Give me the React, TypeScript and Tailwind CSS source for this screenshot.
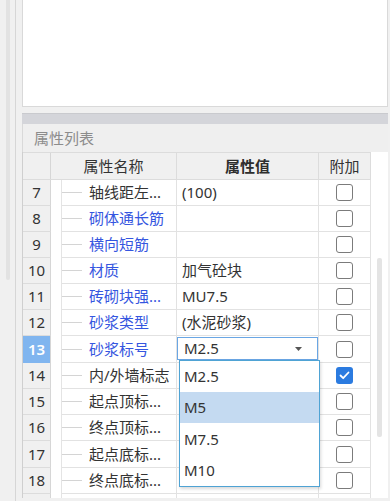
import React from 'react';

type Row = {
  n: number;
  name: string;
  blue?: boolean;
  value?: string;
  checked?: boolean;
  selected?: boolean;
  h: string;
};

const rows: Row[] = [
  { n: 7, name: '轴线距左...', value: '(100)', h: 'h-[26px]' },
  { n: 8, name: '砌体通长筋', blue: true, h: 'h-[26px]' },
  { n: 9, name: '横向短筋', blue: true, h: 'h-[26px]' },
  { n: 10, name: '材质', blue: true, value: '加气砼块', h: 'h-[26px]' },
  { n: 11, name: '砖砌块强...', blue: true, value: 'MU7.5', h: 'h-[26px]' },
  { n: 12, name: '砂浆类型', blue: true, value: '(水泥砂浆)', h: 'h-[26px]' },
  { n: 13, name: '砂浆标号', blue: true, value: 'M2.5', selected: true, h: 'h-[27px]' },
  { n: 14, name: '内/外墙标志', checked: true, h: 'h-[26px]' },
  { n: 15, name: '起点顶标...', h: 'h-[26px]' },
  { n: 16, name: '终点顶标...', h: 'h-[26px]' },
  { n: 17, name: '起点底标...', h: 'h-[27px]' },
  { n: 18, name: '终点底标...', h: 'h-[26px]' },
  { n: 19, name: '', h: 'h-[26px]' },
];

function CheckBox({ checked }: { checked?: boolean }) {
  if (checked) {
    return (
      <div className="w-[17px] h-[17px] rounded-[3px] bg-[#2b7be0] flex items-center justify-center">
        <svg width="11" height="9" viewBox="0 0 11 9">
          <path d="M1.5 4.5 L4.2 7.2 L9.5 1.5" fill="none" stroke="#fff" strokeWidth="1.8" strokeLinecap="round" strokeLinejoin="round" />
        </svg>
      </div>
    );
  }
  return <div className="w-[17px] h-[17px] rounded-[3px] border-[1.5px] border-[#7b7b7b] bg-white" />;
}

export default function App() {
  const font = { fontFamily: '"Noto Sans", "Noto Sans CJK SC", sans-serif' };
  return (
    <div className="w-[390px] h-[501px] bg-[#f0f0f0] flex overflow-hidden text-[#333]" style={font}>
      {/* left gutter */}
      <div className="w-[22px] h-full flex">
        <div className="w-[6px]" />
        <div className="w-[4px] flex flex-col">
          <div className="h-[280px] bg-[#e2e2e2] rounded-b-[2px]" />
        </div>
        <div className="w-[5px]" />
        <div className="w-px h-full bg-[#d6d6d6]" />
      </div>

      {/* main column */}
      <div className="w-[366px] h-full flex flex-col">
        <div className="h-[107px] shrink-0 bg-white border-x border-b border-[#d9d9d9]" />
        <div className="h-[6px] shrink-0" />
        <div className="h-[11px] shrink-0 bg-[#d4d5da] border-t border-[#c9cace]" />
        <div className="h-[28px] shrink-0 bg-[#efefef] flex items-center pl-[11px] text-[15px] text-[#8c8c8c] leading-none border-l border-[#d9d9d9]">
          属性列表
        </div>

        {/* table area */}
        <div className="relative flex h-[346px] shrink-0 overflow-hidden bg-white border-l border-[#cfcfcf]">
          <div className="w-[348px] flex flex-col">
            {/* header */}
            <div className="h-[28px] shrink-0 flex bg-[#f0f0f0] border-y border-[#dcdcdc] text-[15px] leading-none">
              <div className="w-[28px] border-r border-[#d6d6d6]" />
              <div className="w-[126px] border-r border-[#dcdcdc] flex items-center justify-center">属性名称</div>
              <div className="w-[142px] border-r border-[#dcdcdc] flex items-center justify-center font-semibold text-[#2d2d2d]">属性值</div>
              <div className="w-[52px] border-r border-[#dcdcdc] flex items-center justify-center">附加</div>
            </div>
            {rows.map((r) => (
              <div key={r.n} className={`${r.h} shrink-0 flex text-[15px] leading-none`}>
                <div
                  className={`w-[28px] flex items-center justify-center border-r border-[#d6d6d6] ${
                    r.selected ? 'bg-[#80b5ef] text-white font-semibold' : 'bg-[#f0f0f0] border-b border-b-[#dcdcdc]'
                  }`}
                >
                  {r.name !== '' ? r.n : null}
                </div>
                <div className="w-[11px] border-r border-[#e4e4e4]" />
                <div className="w-[115px] flex items-center border-r border-b border-[#e2e2e2]">
                  <div className="w-[20px] h-px bg-[#d4d4d4]" />
                  <span className={`ml-[7px] whitespace-nowrap ${r.blue ? 'text-[#3556e0]' : 'text-[#333]'}`}>{r.name}</span>
                </div>
                <div className="w-[142px] flex items-start border-r border-b border-[#e2e2e2]">
                  {r.selected ? (
                    <div className="mt-px h-[23px] w-full border border-[#6aa6e4] flex items-center pl-[6px] pr-[15px] bg-white">
                      <span className="flex-1">{r.value}</span>
                      <svg width="7" height="4" viewBox="0 0 7 4">
                        <path d="M0 0 H7 L3.5 4 Z" fill="#555" />
                      </svg>
                    </div>
                  ) : (
                    <div className="h-full flex items-center pl-[5px] whitespace-nowrap">{r.value}</div>
                  )}
                </div>
                <div className="w-[52px] flex items-center justify-center border-r border-b border-[#e2e2e2]">
                  {r.name !== '' && <CheckBox checked={r.checked} />}
                </div>
              </div>
            ))}
          </div>

          {/* right scroll strip */}
          <div className="w-[17px] flex">
            <div className="w-[6px]" />
            <div className="w-[5px] flex flex-col">
              <div className="h-[106px]" />
              <div className="h-[179px] bg-[#e4e4e4] rounded-[2px]" />
            </div>
          </div>

          {/* dropdown list */}
          <div className="absolute left-[156px] top-[208px] w-[141px] h-[127px] bg-white border border-[#4fa3d4] shadow-[1px_2px_3px_rgba(0,0,0,0.15)] flex flex-col text-[15px] leading-none">
            <div className="h-[31px] flex items-center pl-[4px]">M2.5</div>
            <div className="h-[31px] flex items-center pl-[4px] bg-[#c4daf1]">M5</div>
            <div className="h-[32px] flex items-center pl-[4px]">M7.5</div>
            <div className="h-[31px] flex items-center pl-[4px]">M10</div>
          </div>
        </div>
        <div className="flex-1 bg-[#f0f0f0]" />
      </div>
      <div className="flex-1 h-full" />
    </div>
  );
}
